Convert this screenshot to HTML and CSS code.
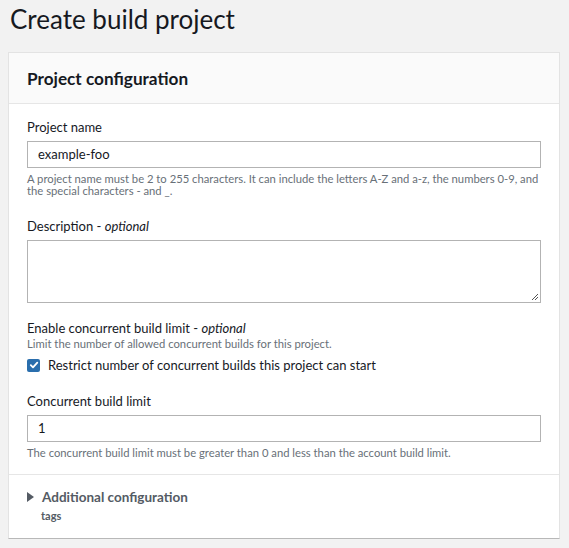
FILE: index.html
```html
<!DOCTYPE html>
<html>
<head>
<meta charset="utf-8">
<link rel="stylesheet" href="styles.css">
</head>
<body>
<h1 class="title">Create build project</h1>
<div class="card">
  <div class="card-header">
    <h2 class="card-title">Project configuration</h2>
  </div>
  <div class="card-body">
    <div class="field">
      <div class="label">Project name</div>
      <div class="input">example-foo</div>
      <div class="hint">A project name must be 2 to 255 characters. It can include the letters A-Z and a-z, the numbers 0-9, and the special characters - and _.</div>
    </div>
    <div class="field field-desc">
      <div class="label">Description - <i>optional</i></div>
      <div class="textarea">
        <svg class="grip" width="8" height="8" viewBox="0 0 8 8"><path d="M7 1 L1 7 M7 4 L4 7" stroke="#555" stroke-width="1" fill="none"/></svg>
      </div>
    </div>
    <div class="field field-enable">
      <div class="label">Enable concurrent build limit - <i>optional</i></div>
      <div class="hint hint-tight">Limit the number of allowed concurrent builds for this project.</div>
      <div class="check-row">
        <span class="checkbox"><svg width="10" height="10" viewBox="0 0 10 10"><path d="M1.8 5.2 L4 7.4 L8.3 2.6" stroke="#fff" stroke-width="1.8" fill="none" stroke-linecap="round" stroke-linejoin="round"/></svg></span>
        <span class="check-label">Restrict number of concurrent builds this project can start</span>
      </div>
    </div>
    <div class="field field-limit">
      <div class="label">Concurrent build limit</div>
      <div class="input">1</div>
      <div class="hint">The concurrent build limit must be greater than 0 and less than the account build limit.</div>
    </div>
  </div>
  <div class="card-footer">
    <div class="expander">
      <span class="caret"></span>
      <span class="expander-title">Additional configuration</span>
    </div>
    <div class="expander-sub">tags</div>
  </div>
</div>
</body>
</html>
```
FILE: styles.css
```css
html, body {
  background: #f2f2f2;
}
body {
  margin: 0 9px 0 8px;
  font-family: Lato, "Liberation Sans", sans-serif;
  color: #16191f;
}
.title {
  margin: 0;
  padding: 3px 0 0 2px;
  height: 52px;
  box-sizing: border-box;
  font-size: 26px;
  font-weight: 400;
  line-height: 32px;
  color: #16191f;
}
.card {
  background: #fff;
  border: 1px solid #e3e3e3;
  border-bottom-color: #b8b8b8;
  box-shadow: 0 1px 1px rgba(0, 28, 36, 0.15);
}
.card-header {
  background: #fafafa;
  border-bottom: 1px solid #e6e6e6;
  height: 51px;
  box-sizing: border-box;
  padding: 0 18px;
  display: flex;
  align-items: center;
}
.card-title {
  margin: 0;
  font-size: 17.2px;
  font-weight: 700;
  color: #16191f;
}
.card-body {
  padding: 14px 18px 15px;
  display: flex;
  flex-direction: column;
}
.field-desc {
  margin-top: 20px;
}
.field-enable {
  margin-top: 16px;
}
.field-limit {
  margin-top: 18px;
}
.label {
  font-size: 13px;
  line-height: 18px;
  color: #16191f;
}
.label i {
  font-style: italic;
}
.input {
  margin-top: 5px;
  height: 27px;
  box-sizing: border-box;
  border: 1px solid #b3b3b3;
  background: #fff;
  padding: 0 10px;
  font-size: 13px;
  line-height: 25px;
  color: #16191f;
}
.hint {
  margin-top: 5px;
  font-size: 11.25px;
  line-height: 12px;
  color: #687078;
}
.hint-tight {
  margin-top: 1px;
}
.textarea {
  margin-top: 5px;
  height: 63px;
  box-sizing: border-box;
  border: 1px solid #b3b3b3;
  background: #fff;
  position: relative;
}
.grip {
  position: absolute;
  right: 1px;
  bottom: 1px;
}
.check-row {
  margin-top: 6px;
  display: flex;
  align-items: center;
  gap: 8px;
}
.checkbox {
  width: 13px;
  height: 13px;
  border-radius: 2px;
  background: #2a6ead;
  display: flex;
  align-items: center;
  justify-content: center;
}
.check-label {
  font-size: 13px;
  line-height: 18px;
  color: #16191f;
}
.card-footer {
  border-top: 1px solid #e6e6e6;
  padding: 13px 18px 15px;
}
.expander {
  display: flex;
  align-items: center;
  gap: 8px;
}
.caret {
  width: 0;
  height: 0;
  border-top: 5px solid transparent;
  border-bottom: 5px solid transparent;
  border-left: 7px solid #545b64;
}
.expander-title {
  font-size: 13.5px;
  font-weight: 700;
  line-height: 18px;
  color: #545b64;
}
.expander-sub {
  margin-top: 3px;
  padding-left: 14px;
  font-size: 11px;
  line-height: 14px;
  font-weight: 700;
  color: #545b64;
}
```
